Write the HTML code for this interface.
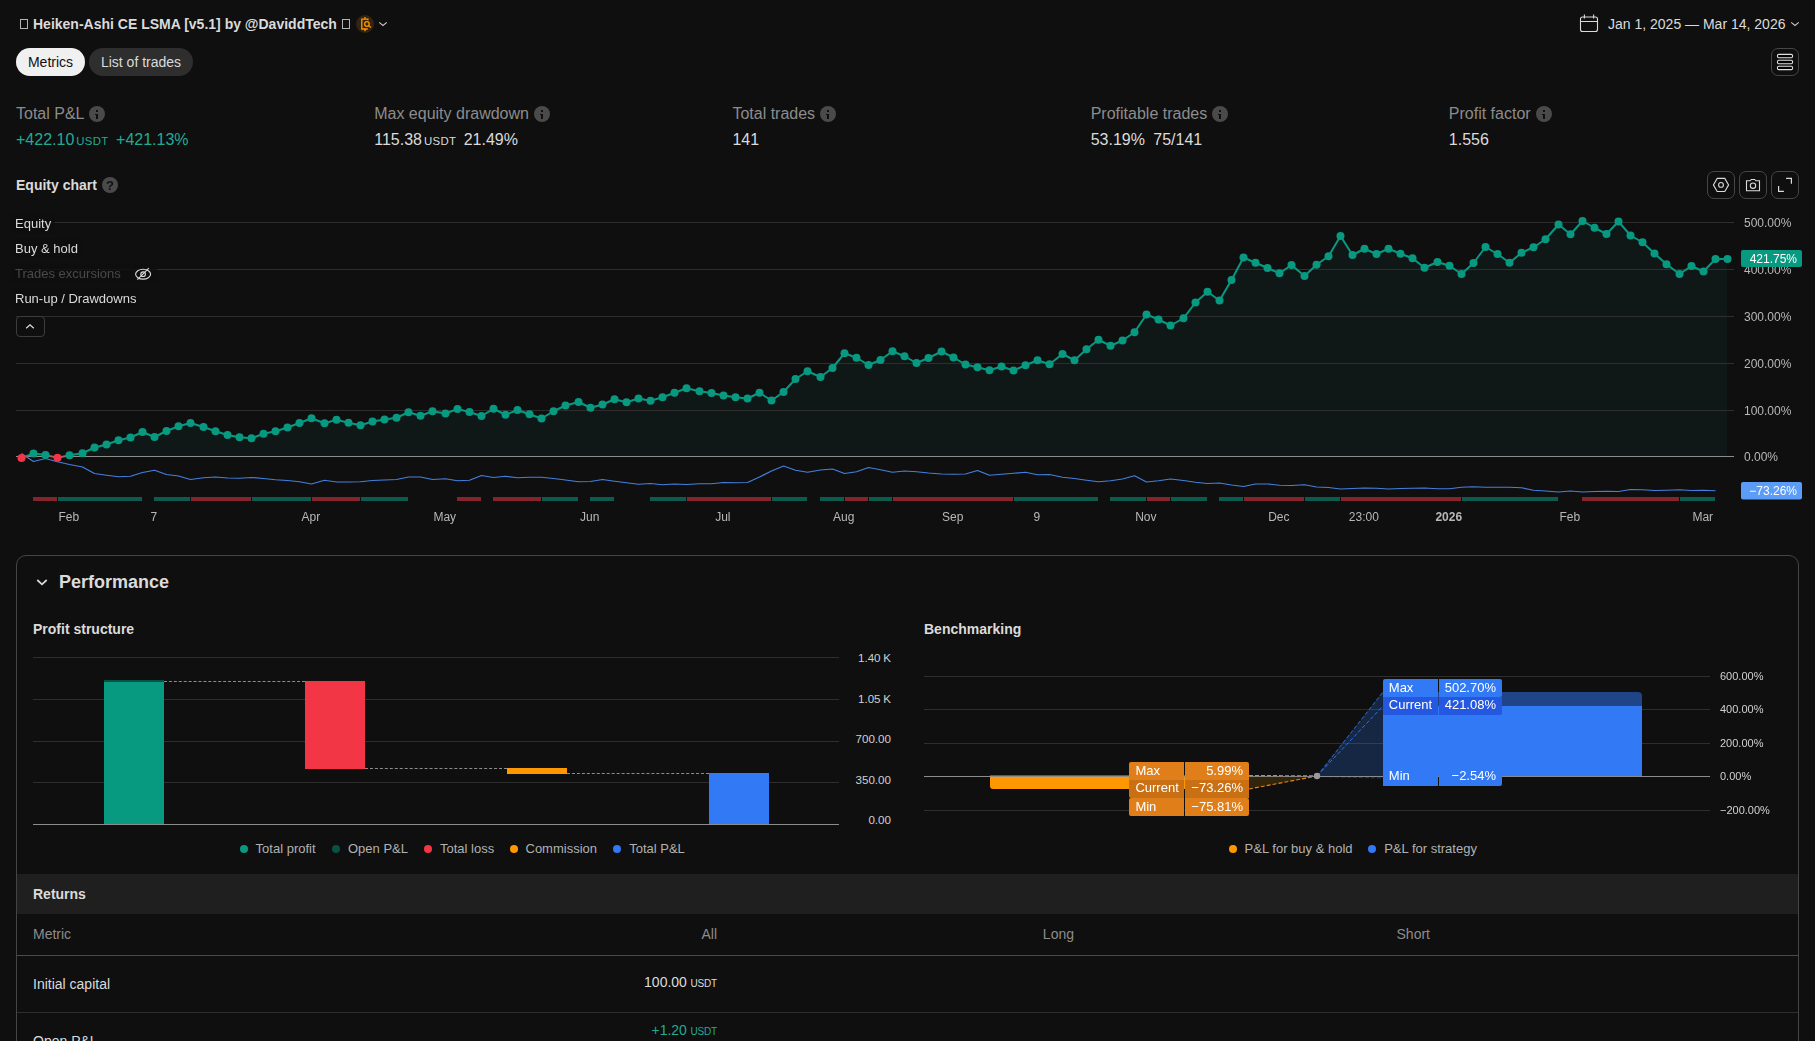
<!DOCTYPE html>
<html lang="en"><head><meta charset="utf-8"><title>Strategy report</title>
<style>
*{box-sizing:border-box}
html,body{margin:0;padding:0}
body{width:1815px;height:1041px;overflow:hidden;position:relative;background:#0f0f0f;color:#dbdbdb;font-family:"Liberation Sans",sans-serif;font-size:14px}
.abs{position:absolute}
.t{position:absolute;white-space:nowrap;line-height:1}
.b{font-weight:700}
.tofu{position:absolute;width:8px;height:10px;border:1px solid #b4b4b4}
.pill{position:absolute;top:48px;height:28px;border-radius:14px;font-size:14px;line-height:28px;text-align:center}
.sq{position:absolute;width:28px;height:28px;border:1px solid #464646;border-radius:7px}
.sq svg{position:absolute;left:-1px;top:-1px}
.ml{font-size:16px;color:#8c8c8c;top:106px}
.mv{font-size:16px;color:#dbdbdb;top:132px}
.cur{font-size:.7143em;letter-spacing:.3px;margin-left:2px}
.gr{color:#22ab94}
.info{position:absolute;width:16px;height:16px;border-radius:50%;background:#4a4a4a;top:106px}
.info i{position:absolute;left:7px;width:2px;background:#0f0f0f}
.leg{position:absolute;left:11px;height:21px;background:rgba(15,15,15,.82);font-size:13px;line-height:21px;padding:0 4px 0 4px;white-space:nowrap;color:#dbdbdb}
.lg{position:absolute;top:842px;font-size:13px;color:#b2b2b2;white-space:nowrap;line-height:14px}
.lg i{position:absolute;left:-16px;top:3px;width:8px;height:8px;border-radius:50%}
.ax{position:absolute;font-size:11.6px;color:#d1d1d1;white-space:nowrap;line-height:12px;margin-top:-.3px;word-spacing:-.5px}
.gl{position:absolute;height:1px;background:#2e2e2e}
.tag{position:absolute;height:18px;color:#fff;font-size:13px;line-height:18px;white-space:nowrap;will-change:transform}
</style></head><body>

<!-- header -->
<div class="tofu" style="left:20px;top:19px"></div>
<div class="t b" style="left:33px;top:17px;font-size:14px">Heiken-Ashi CE LSMA [v5.1] by @DaviddTech</div>
<div class="tofu" style="left:342px;top:19px"></div>
<svg class="abs" style="left:355px;top:14px" width="20" height="20" viewBox="0 0 20 20">
<circle cx="10" cy="10" r="9" fill="#33240f"/>
<g fill="none" stroke="#ff9800" stroke-width="1.3">
<path d="M10 3v2.2M10 15v2.2M12.9 6.3V5.2H6.8v9.8h6"/>
<circle cx="11.9" cy="10" r="2.3"/><path d="M13.6 11.7L16 13.6"/>
</g></svg>
<svg class="abs" style="left:378px;top:20px" width="10" height="8" viewBox="0 0 10 8"><path d="M1.2 2.4L5 5.5L8.8 2.4" fill="none" stroke="#c8c8c8" stroke-width="1.1"/></svg>

<svg class="abs" style="left:1579px;top:13px" width="20" height="20" viewBox="0 0 20 20"><g fill="none" stroke="#dbdbdb" stroke-width="1.1"><rect x="1.5" y="4" width="17" height="14.5" rx="2"/><path d="M1.5 8.5h17M5.4 1.5v4M14.6 1.5v4"/></g></svg>
<div class="t" style="left:1608px;top:17px;font-size:14px">Jan 1, 2025 — Mar 14, 2026</div>
<svg class="abs" style="left:1790px;top:20px" width="10" height="8" viewBox="0 0 10 8"><path d="M1.2 2.4L5 5.5L8.8 2.4" fill="none" stroke="#c8c8c8" stroke-width="1.1"/></svg>

<div class="pill" style="left:16px;width:69px;background:#f0f0f0;color:#0f0f0f">Metrics</div>
<div class="pill" style="left:89px;width:104px;background:#2e2e2e;color:#dbdbdb">List of trades</div>
<div class="sq" style="left:1771px;top:48px"><svg width="28" height="28" viewBox="0 0 28 28"><g fill="#000" stroke="#e0e0e0" stroke-width="1.1"><rect x="6.5" y="6.4" width="15" height="3.4" rx="1.2"/><rect x="6.5" y="12.3" width="15" height="3.4" rx="1.2"/><rect x="6.5" y="18.2" width="15" height="3.4" rx="1.2"/></g></svg></div>

<!-- metrics -->
<div class="t ml" style="left:16px">Total P&amp;L</div><div class="info" style="left:89px"><i style="top:3.500px;height:2px"></i><i style="top:7.500px;height:5.500px"></i><i style="top:7.500px;left:6px;width:2px;height:1.200px"></i></div>
<div class="t mv gr" style="left:16px">+422.10<span class="cur">USDT</span><span style="margin-left:7.5px">+421.13%</span></div>
<div class="t ml" style="left:374.200px">Max equity drawdown</div><div class="info" style="left:534px"><i style="top:3.500px;height:2px"></i><i style="top:7.500px;height:5.500px"></i><i style="top:7.500px;left:6px;width:2px;height:1.200px"></i></div>
<div class="t mv" style="left:374.200px">115.38<span class="cur">USDT</span><span style="margin-left:7.5px">21.49%</span></div>
<div class="t ml" style="left:732.400px">Total trades</div><div class="info" style="left:820px"><i style="top:3.500px;height:2px"></i><i style="top:7.500px;height:5.500px"></i><i style="top:7.500px;left:6px;width:2px;height:1.200px"></i></div>
<div class="t mv" style="left:732.400px">141</div>
<div class="t ml" style="left:1090.700px">Profitable trades</div><div class="info" style="left:1212px"><i style="top:3.500px;height:2px"></i><i style="top:7.500px;height:5.500px"></i><i style="top:7.500px;left:6px;width:2px;height:1.200px"></i></div>
<div class="t mv" style="left:1090.700px">53.19%<span style="margin-left:8.300px">75/141</span></div>
<div class="t ml" style="left:1448.800px">Profit factor</div><div class="info" style="left:1536px"><i style="top:3.500px;height:2px"></i><i style="top:7.500px;height:5.500px"></i><i style="top:7.500px;left:6px;width:2px;height:1.200px"></i></div>
<div class="t mv" style="left:1448.800px">1.556</div>

<!-- equity chart header -->
<div class="t b" style="left:16px;top:178px;font-size:14px">Equity chart</div>
<div class="info" style="left:102px;top:177px"><span class="t b" style="left:4.100px;top:1.800px;font-size:13px;color:#0f0f0f;will-change:transform">?</span></div>
<div class="sq" style="left:1707px;top:171px"><svg width="28" height="28" viewBox="0 0 28 28"><g fill="none" stroke="#dbdbdb" stroke-width="1.1"><path d="M10.200 7.350h7.600l3.800 6.550l-3.800 6.550h-7.600l-3.800-6.550z"/><circle cx="14" cy="13.900" r="2.400"/></g></svg></div>
<div class="sq" style="left:1739px;top:171px"><svg width="28" height="28" viewBox="0 0 28 28"><g fill="none" stroke="#dbdbdb" stroke-width="1.1"><path d="M7.5 9.8h3.6l1.2-1.3h3.4l1.2 1.3h3.6v10h-13z"/><circle cx="14" cy="14.7" r="2.7"/></g></svg></div>
<div class="sq" style="left:1771px;top:171px"><svg width="28" height="28" viewBox="0 0 28 28"><g fill="none" stroke="#dbdbdb" stroke-width="1.2"><path d="M15.100 7.400h5.300v5.300M7.600 15.100v5.300h5.300"/></g></svg></div>

<svg class="abs" style="left:0;top:200px;will-change:transform" width="1815" height="340" viewBox="0 200 1815 340">
<path d="M21.5,456.5 L21.5,458 L33.5,453.5 L45.5,455 L57.5,457.75 L69.5,455.25 L82.5,453.25 L94.5,447.5 L106.5,444.5 L118.5,440.25 L130.5,437.5 L142.5,432 L154.5,437 L166.5,431 L178.5,426.25 L190.5,423 L203.5,427 L215.5,431.25 L227.5,435 L239.5,437.25 L251.5,438.25 L263.5,433.75 L275.5,431.25 L287.5,427.5 L299.5,423 L311.5,418.25 L324.5,423.25 L336.5,419.75 L348.5,422.75 L360.5,425.25 L372.5,421.5 L384.5,419.5 L396.5,417.75 L408.5,412.25 L420.5,415.75 L432.5,411.25 L445.5,413.5 L457.5,409 L469.5,412 L481.5,416 L493.5,408.75 L505.5,414.75 L517.5,410 L529.5,414.25 L541.5,418.5 L553.5,411.25 L565.5,405.5 L578.5,402 L590.5,407.75 L602.5,404.5 L614.5,399.25 L626.5,402.25 L638.5,398.5 L650.5,400.75 L662.5,397.25 L674.5,392.75 L686.5,388.25 L699.5,391.25 L711.5,393 L723.5,395.5 L735.5,397.25 L747.5,398.5 L759.5,392.75 L771.5,400.5 L783.5,392 L795.5,379 L807.5,371.25 L820.5,377 L832.5,368 L844.5,353.25 L856.5,357.75 L868.5,365 L880.5,360 L892.5,351.25 L904.5,356.25 L916.5,363 L928.5,358 L941.5,351.5 L953.5,357.5 L965.5,364.5 L977.5,367.25 L989.5,370.25 L1001.5,366.5 L1013.5,370.5 L1025.5,365.25 L1037.5,360.25 L1049.5,364.25 L1062.5,354 L1074.5,360.25 L1086.5,349.25 L1098.5,339.75 L1110.5,345.75 L1122.5,340.5 L1134.5,332.25 L1146.5,314.5 L1158.5,319.5 L1170.5,325.5 L1183.5,318.25 L1195.5,302.5 L1207.5,291.75 L1219.5,300.5 L1231.5,280 L1243.5,257.5 L1255.5,262.75 L1267.5,268 L1279.5,273.25 L1291.5,265 L1304.5,276 L1316.5,264.75 L1328.5,256.25 L1340.5,236 L1352.5,255 L1364.5,248.75 L1376.5,254 L1388.5,248.75 L1400.5,253.75 L1412.5,258.25 L1424.5,267.75 L1437.5,262 L1449.5,265.75 L1461.5,274 L1473.5,263 L1485.5,247 L1497.5,254 L1509.5,262.75 L1521.5,252.75 L1533.5,247.25 L1545.5,239.25 L1558.5,224.5 L1570.5,234.25 L1582.5,221 L1594.5,227.75 L1606.5,234 L1618.5,221.5 L1630.5,235.5 L1642.5,242.25 L1654.5,253.5 L1666.5,264.25 L1679.5,274 L1691.5,266 L1703.5,271.5 L1715.5,259 L1727.5,259 L1727.0,259 L1727.0,456.5 Z" fill="#101717"/>
<rect x="16" y="222.0" width="1718" height="1" fill="#2e2e2e"/><rect x="16" y="269.0" width="1718" height="1" fill="#2e2e2e"/><rect x="16" y="316.0" width="1718" height="1" fill="#2e2e2e"/><rect x="16" y="363.0" width="1718" height="1" fill="#2e2e2e"/><rect x="16" y="410.0" width="1718" height="1" fill="#2e2e2e"/>
<rect x="16" y="456" width="1718" height="1" fill="#8c8c8c"/>
<polyline points="21.5,453.6 33.5,461.5 45.5,458.5 57.5,461.75 69.5,464.5 82.5,467 94.5,473.5 106.5,475.25 118.5,476.75 130.5,476.25 142.5,472.5 154.5,470.25 166.5,474.5 178.5,476 190.5,479.5 203.5,477.75 215.5,477 227.5,478 239.5,478.25 251.5,477.5 263.5,478.5 275.5,479.75 287.5,480.5 299.5,481.75 311.5,484 324.5,480.25 336.5,482 348.5,482 360.5,481.75 372.5,480.5 384.5,480 396.5,479.5 408.5,477 420.5,477 432.5,479.5 445.5,478.75 457.5,480.75 469.5,480.25 481.5,475.5 493.5,477.5 505.5,476.25 517.5,477.75 529.5,477.25 541.5,477.25 553.5,478.5 565.5,480 578.5,481.75 590.5,481.5 602.5,479.5 614.5,481.25 626.5,482.75 638.5,484.25 650.5,483.5 662.5,484.75 674.5,484 686.5,484.5 699.5,483.75 711.5,483.75 723.5,482.5 735.5,482.75 747.5,482.5 759.5,477 771.5,471 783.5,466 795.5,470.25 807.5,472.25 820.5,470 832.5,469 844.5,473.5 856.5,471.75 868.5,467.5 880.5,469.75 892.5,472.25 904.5,471 916.5,471.75 928.5,473 941.5,474 953.5,474.25 965.5,474 977.5,470.5 989.5,475.25 1001.5,474.25 1013.5,473.25 1025.5,472.25 1037.5,474.75 1049.5,474.5 1062.5,477.25 1074.5,478.5 1086.5,480.25 1098.5,481.75 1110.5,480.75 1122.5,479 1134.5,475.75 1146.5,482 1158.5,480.75 1170.5,479 1183.5,480.5 1195.5,482.25 1207.5,483.5 1219.5,483 1231.5,485 1243.5,486.5 1255.5,484 1267.5,484 1279.5,485.25 1291.5,485.5 1304.5,484.75 1316.5,487 1328.5,487.5 1340.5,489 1352.5,488.5 1364.5,488 1376.5,488.25 1388.5,489 1400.5,488.5 1412.5,488.25 1424.5,488 1437.5,488.75 1449.5,488.75 1461.5,487.25 1473.5,486.75 1485.5,487.25 1497.5,487.25 1509.5,487.25 1521.5,487.75 1533.5,490.25 1545.5,491 1558.5,492 1570.5,491 1582.5,492 1594.5,491.5 1606.5,491.25 1618.5,491.5 1630.5,489.5 1642.5,489.75 1654.5,490.5 1666.5,490.25 1679.5,489.75 1691.5,490.5 1703.5,490.25 1715.5,490.75" fill="none" stroke="#4480e0" stroke-width="1.2" stroke-linejoin="round"/>
<clipPath id="cu"><rect x="0" y="200" width="1815" height="256.5"/></clipPath><clipPath id="cd"><rect x="0" y="456.5" width="1815" height="40"/></clipPath>
<polyline points="21.5,458 33.5,453.5 45.5,455 57.5,457.75 69.5,455.25 82.5,453.25 94.5,447.5 106.5,444.5 118.5,440.25 130.5,437.5 142.5,432 154.5,437 166.5,431 178.5,426.25 190.5,423 203.5,427 215.5,431.25 227.5,435 239.5,437.25 251.5,438.25 263.5,433.75 275.5,431.25 287.5,427.5 299.5,423 311.5,418.25 324.5,423.25 336.5,419.75 348.5,422.75 360.5,425.25 372.5,421.5 384.5,419.5 396.5,417.75 408.5,412.25 420.5,415.75 432.5,411.25 445.5,413.5 457.5,409 469.5,412 481.5,416 493.5,408.75 505.5,414.75 517.5,410 529.5,414.25 541.5,418.5 553.5,411.25 565.5,405.5 578.5,402 590.5,407.75 602.5,404.5 614.5,399.25 626.5,402.25 638.5,398.5 650.5,400.75 662.5,397.25 674.5,392.75 686.5,388.25 699.5,391.25 711.5,393 723.5,395.5 735.5,397.25 747.5,398.5 759.5,392.75 771.5,400.5 783.5,392 795.5,379 807.5,371.25 820.5,377 832.5,368 844.5,353.25 856.5,357.75 868.5,365 880.5,360 892.5,351.25 904.5,356.25 916.5,363 928.5,358 941.5,351.5 953.5,357.5 965.5,364.5 977.5,367.25 989.5,370.25 1001.5,366.5 1013.5,370.5 1025.5,365.25 1037.5,360.25 1049.5,364.25 1062.5,354 1074.5,360.25 1086.5,349.25 1098.5,339.75 1110.5,345.75 1122.5,340.5 1134.5,332.25 1146.5,314.5 1158.5,319.5 1170.5,325.5 1183.5,318.25 1195.5,302.5 1207.5,291.75 1219.5,300.5 1231.5,280 1243.5,257.5 1255.5,262.75 1267.5,268 1279.5,273.25 1291.5,265 1304.5,276 1316.5,264.75 1328.5,256.25 1340.5,236 1352.5,255 1364.5,248.75 1376.5,254 1388.5,248.75 1400.5,253.75 1412.5,258.25 1424.5,267.75 1437.5,262 1449.5,265.75 1461.5,274 1473.5,263 1485.5,247 1497.5,254 1509.5,262.75 1521.5,252.75 1533.5,247.25 1545.5,239.25 1558.5,224.5 1570.5,234.25 1582.5,221 1594.5,227.75 1606.5,234 1618.5,221.5 1630.5,235.5 1642.5,242.25 1654.5,253.5 1666.5,264.25 1679.5,274 1691.5,266 1703.5,271.5 1715.5,259 1727.5,259" fill="none" stroke="#089981" stroke-width="2" stroke-linejoin="round" clip-path="url(#cu)"/>
<polyline points="21.5,458 33.5,453.5 45.5,455 57.5,457.75 69.5,455.25 82.5,453.25 94.5,447.5 106.5,444.5 118.5,440.25 130.5,437.5 142.5,432 154.5,437 166.5,431 178.5,426.25 190.5,423 203.5,427 215.5,431.25 227.5,435 239.5,437.25 251.5,438.25 263.5,433.75 275.5,431.25 287.5,427.5 299.5,423 311.5,418.25 324.5,423.25 336.5,419.75 348.5,422.75 360.5,425.25 372.5,421.5 384.5,419.5 396.5,417.75 408.5,412.25 420.5,415.75 432.5,411.25 445.5,413.5 457.5,409 469.5,412 481.5,416 493.5,408.75 505.5,414.75 517.5,410 529.5,414.25 541.5,418.5 553.5,411.25 565.5,405.5 578.5,402 590.5,407.75 602.5,404.5 614.5,399.25 626.5,402.25 638.5,398.5 650.5,400.75 662.5,397.25 674.5,392.75 686.5,388.25 699.5,391.25 711.5,393 723.5,395.5 735.5,397.25 747.5,398.5 759.5,392.75 771.5,400.5 783.5,392 795.5,379 807.5,371.25 820.5,377 832.5,368 844.5,353.25 856.5,357.75 868.5,365 880.5,360 892.5,351.25 904.5,356.25 916.5,363 928.5,358 941.5,351.5 953.5,357.5 965.5,364.5 977.5,367.25 989.5,370.25 1001.5,366.5 1013.5,370.5 1025.5,365.25 1037.5,360.25 1049.5,364.25 1062.5,354 1074.5,360.25 1086.5,349.25 1098.5,339.75 1110.5,345.75 1122.5,340.5 1134.5,332.25 1146.5,314.5 1158.5,319.5 1170.5,325.5 1183.5,318.25 1195.5,302.5 1207.5,291.75 1219.5,300.5 1231.5,280 1243.5,257.5 1255.5,262.75 1267.5,268 1279.5,273.25 1291.5,265 1304.5,276 1316.5,264.75 1328.5,256.25 1340.5,236 1352.5,255 1364.5,248.75 1376.5,254 1388.5,248.75 1400.5,253.75 1412.5,258.25 1424.5,267.75 1437.5,262 1449.5,265.75 1461.5,274 1473.5,263 1485.5,247 1497.5,254 1509.5,262.75 1521.5,252.75 1533.5,247.25 1545.5,239.25 1558.5,224.5 1570.5,234.25 1582.5,221 1594.5,227.75 1606.5,234 1618.5,221.5 1630.5,235.5 1642.5,242.25 1654.5,253.5 1666.5,264.25 1679.5,274 1691.5,266 1703.5,271.5 1715.5,259 1727.5,259" fill="none" stroke="#f23645" stroke-width="2" stroke-linejoin="round" clip-path="url(#cd)"/>
<circle cx="21.5" cy="458" r="4" fill="#f23645"/><circle cx="33.5" cy="453.5" r="4" fill="#089981"/><circle cx="45.5" cy="455" r="4" fill="#089981"/><circle cx="57.5" cy="457.75" r="4" fill="#f23645"/><circle cx="69.5" cy="455.25" r="4" fill="#089981"/><circle cx="82.5" cy="453.25" r="4" fill="#089981"/><circle cx="94.5" cy="447.5" r="4" fill="#089981"/><circle cx="106.5" cy="444.5" r="4" fill="#089981"/><circle cx="118.5" cy="440.25" r="4" fill="#089981"/><circle cx="130.5" cy="437.5" r="4" fill="#089981"/><circle cx="142.5" cy="432" r="4" fill="#089981"/><circle cx="154.5" cy="437" r="4" fill="#089981"/><circle cx="166.5" cy="431" r="4" fill="#089981"/><circle cx="178.5" cy="426.25" r="4" fill="#089981"/><circle cx="190.5" cy="423" r="4" fill="#089981"/><circle cx="203.5" cy="427" r="4" fill="#089981"/><circle cx="215.5" cy="431.25" r="4" fill="#089981"/><circle cx="227.5" cy="435" r="4" fill="#089981"/><circle cx="239.5" cy="437.25" r="4" fill="#089981"/><circle cx="251.5" cy="438.25" r="4" fill="#089981"/><circle cx="263.5" cy="433.75" r="4" fill="#089981"/><circle cx="275.5" cy="431.25" r="4" fill="#089981"/><circle cx="287.5" cy="427.5" r="4" fill="#089981"/><circle cx="299.5" cy="423" r="4" fill="#089981"/><circle cx="311.5" cy="418.25" r="4" fill="#089981"/><circle cx="324.5" cy="423.25" r="4" fill="#089981"/><circle cx="336.5" cy="419.75" r="4" fill="#089981"/><circle cx="348.5" cy="422.75" r="4" fill="#089981"/><circle cx="360.5" cy="425.25" r="4" fill="#089981"/><circle cx="372.5" cy="421.5" r="4" fill="#089981"/><circle cx="384.5" cy="419.5" r="4" fill="#089981"/><circle cx="396.5" cy="417.75" r="4" fill="#089981"/><circle cx="408.5" cy="412.25" r="4" fill="#089981"/><circle cx="420.5" cy="415.75" r="4" fill="#089981"/><circle cx="432.5" cy="411.25" r="4" fill="#089981"/><circle cx="445.5" cy="413.5" r="4" fill="#089981"/><circle cx="457.5" cy="409" r="4" fill="#089981"/><circle cx="469.5" cy="412" r="4" fill="#089981"/><circle cx="481.5" cy="416" r="4" fill="#089981"/><circle cx="493.5" cy="408.75" r="4" fill="#089981"/><circle cx="505.5" cy="414.75" r="4" fill="#089981"/><circle cx="517.5" cy="410" r="4" fill="#089981"/><circle cx="529.5" cy="414.25" r="4" fill="#089981"/><circle cx="541.5" cy="418.5" r="4" fill="#089981"/><circle cx="553.5" cy="411.25" r="4" fill="#089981"/><circle cx="565.5" cy="405.5" r="4" fill="#089981"/><circle cx="578.5" cy="402" r="4" fill="#089981"/><circle cx="590.5" cy="407.75" r="4" fill="#089981"/><circle cx="602.5" cy="404.5" r="4" fill="#089981"/><circle cx="614.5" cy="399.25" r="4" fill="#089981"/><circle cx="626.5" cy="402.25" r="4" fill="#089981"/><circle cx="638.5" cy="398.5" r="4" fill="#089981"/><circle cx="650.5" cy="400.75" r="4" fill="#089981"/><circle cx="662.5" cy="397.25" r="4" fill="#089981"/><circle cx="674.5" cy="392.75" r="4" fill="#089981"/><circle cx="686.5" cy="388.25" r="4" fill="#089981"/><circle cx="699.5" cy="391.25" r="4" fill="#089981"/><circle cx="711.5" cy="393" r="4" fill="#089981"/><circle cx="723.5" cy="395.5" r="4" fill="#089981"/><circle cx="735.5" cy="397.25" r="4" fill="#089981"/><circle cx="747.5" cy="398.5" r="4" fill="#089981"/><circle cx="759.5" cy="392.75" r="4" fill="#089981"/><circle cx="771.5" cy="400.5" r="4" fill="#089981"/><circle cx="783.5" cy="392" r="4" fill="#089981"/><circle cx="795.5" cy="379" r="4" fill="#089981"/><circle cx="807.5" cy="371.25" r="4" fill="#089981"/><circle cx="820.5" cy="377" r="4" fill="#089981"/><circle cx="832.5" cy="368" r="4" fill="#089981"/><circle cx="844.5" cy="353.25" r="4" fill="#089981"/><circle cx="856.5" cy="357.75" r="4" fill="#089981"/><circle cx="868.5" cy="365" r="4" fill="#089981"/><circle cx="880.5" cy="360" r="4" fill="#089981"/><circle cx="892.5" cy="351.25" r="4" fill="#089981"/><circle cx="904.5" cy="356.25" r="4" fill="#089981"/><circle cx="916.5" cy="363" r="4" fill="#089981"/><circle cx="928.5" cy="358" r="4" fill="#089981"/><circle cx="941.5" cy="351.5" r="4" fill="#089981"/><circle cx="953.5" cy="357.5" r="4" fill="#089981"/><circle cx="965.5" cy="364.5" r="4" fill="#089981"/><circle cx="977.5" cy="367.25" r="4" fill="#089981"/><circle cx="989.5" cy="370.25" r="4" fill="#089981"/><circle cx="1001.5" cy="366.5" r="4" fill="#089981"/><circle cx="1013.5" cy="370.5" r="4" fill="#089981"/><circle cx="1025.5" cy="365.25" r="4" fill="#089981"/><circle cx="1037.5" cy="360.25" r="4" fill="#089981"/><circle cx="1049.5" cy="364.25" r="4" fill="#089981"/><circle cx="1062.5" cy="354" r="4" fill="#089981"/><circle cx="1074.5" cy="360.25" r="4" fill="#089981"/><circle cx="1086.5" cy="349.25" r="4" fill="#089981"/><circle cx="1098.5" cy="339.75" r="4" fill="#089981"/><circle cx="1110.5" cy="345.75" r="4" fill="#089981"/><circle cx="1122.5" cy="340.5" r="4" fill="#089981"/><circle cx="1134.5" cy="332.25" r="4" fill="#089981"/><circle cx="1146.5" cy="314.5" r="4" fill="#089981"/><circle cx="1158.5" cy="319.5" r="4" fill="#089981"/><circle cx="1170.5" cy="325.5" r="4" fill="#089981"/><circle cx="1183.5" cy="318.25" r="4" fill="#089981"/><circle cx="1195.5" cy="302.5" r="4" fill="#089981"/><circle cx="1207.5" cy="291.75" r="4" fill="#089981"/><circle cx="1219.5" cy="300.5" r="4" fill="#089981"/><circle cx="1231.5" cy="280" r="4" fill="#089981"/><circle cx="1243.5" cy="257.5" r="4" fill="#089981"/><circle cx="1255.5" cy="262.75" r="4" fill="#089981"/><circle cx="1267.5" cy="268" r="4" fill="#089981"/><circle cx="1279.5" cy="273.25" r="4" fill="#089981"/><circle cx="1291.5" cy="265" r="4" fill="#089981"/><circle cx="1304.5" cy="276" r="4" fill="#089981"/><circle cx="1316.5" cy="264.75" r="4" fill="#089981"/><circle cx="1328.5" cy="256.25" r="4" fill="#089981"/><circle cx="1340.5" cy="236" r="4" fill="#089981"/><circle cx="1352.5" cy="255" r="4" fill="#089981"/><circle cx="1364.5" cy="248.75" r="4" fill="#089981"/><circle cx="1376.5" cy="254" r="4" fill="#089981"/><circle cx="1388.5" cy="248.75" r="4" fill="#089981"/><circle cx="1400.5" cy="253.75" r="4" fill="#089981"/><circle cx="1412.5" cy="258.25" r="4" fill="#089981"/><circle cx="1424.5" cy="267.75" r="4" fill="#089981"/><circle cx="1437.5" cy="262" r="4" fill="#089981"/><circle cx="1449.5" cy="265.75" r="4" fill="#089981"/><circle cx="1461.5" cy="274" r="4" fill="#089981"/><circle cx="1473.5" cy="263" r="4" fill="#089981"/><circle cx="1485.5" cy="247" r="4" fill="#089981"/><circle cx="1497.5" cy="254" r="4" fill="#089981"/><circle cx="1509.5" cy="262.75" r="4" fill="#089981"/><circle cx="1521.5" cy="252.75" r="4" fill="#089981"/><circle cx="1533.5" cy="247.25" r="4" fill="#089981"/><circle cx="1545.5" cy="239.25" r="4" fill="#089981"/><circle cx="1558.5" cy="224.5" r="4" fill="#089981"/><circle cx="1570.5" cy="234.25" r="4" fill="#089981"/><circle cx="1582.5" cy="221" r="4" fill="#089981"/><circle cx="1594.5" cy="227.75" r="4" fill="#089981"/><circle cx="1606.5" cy="234" r="4" fill="#089981"/><circle cx="1618.5" cy="221.5" r="4" fill="#089981"/><circle cx="1630.5" cy="235.5" r="4" fill="#089981"/><circle cx="1642.5" cy="242.25" r="4" fill="#089981"/><circle cx="1654.5" cy="253.5" r="4" fill="#089981"/><circle cx="1666.5" cy="264.25" r="4" fill="#089981"/><circle cx="1679.5" cy="274" r="4" fill="#089981"/><circle cx="1691.5" cy="266" r="4" fill="#089981"/><circle cx="1703.5" cy="271.5" r="4" fill="#089981"/><circle cx="1715.5" cy="259" r="4" fill="#089981"/><circle cx="1727.5" cy="259" r="4" fill="#089981"/>
<rect x="33.00" y="497" width="24.00" height="4" fill="#86242d"/><rect x="58.00" y="497" width="84.00" height="4" fill="#0b5c4f"/><rect x="154.00" y="497" width="36.00" height="4" fill="#0b5c4f"/><rect x="191.00" y="497" width="60.00" height="4" fill="#86242d"/><rect x="252.00" y="497" width="59.00" height="4" fill="#0b5c4f"/><rect x="312.00" y="497" width="48.00" height="4" fill="#86242d"/><rect x="361.00" y="497" width="47.00" height="4" fill="#0b5c4f"/><rect x="457.00" y="497" width="24.00" height="4" fill="#86242d"/><rect x="493.00" y="497" width="48.00" height="4" fill="#86242d"/><rect x="542.00" y="497" width="36.00" height="4" fill="#0b5c4f"/><rect x="590.00" y="497" width="24.00" height="4" fill="#0b5c4f"/><rect x="650.00" y="497" width="36.00" height="4" fill="#0b5c4f"/><rect x="687.00" y="497" width="84.00" height="4" fill="#86242d"/><rect x="772.00" y="497" width="35.00" height="4" fill="#0b5c4f"/><rect x="820.00" y="497" width="24.00" height="4" fill="#0b5c4f"/><rect x="845.00" y="497" width="23.00" height="4" fill="#86242d"/><rect x="869.00" y="497" width="23.00" height="4" fill="#0b5c4f"/><rect x="893.00" y="497" width="120.00" height="4" fill="#86242d"/><rect x="1014.00" y="497" width="84.00" height="4" fill="#0b5c4f"/><rect x="1110.00" y="497" width="36.00" height="4" fill="#0b5c4f"/><rect x="1147.00" y="497" width="23.00" height="4" fill="#86242d"/><rect x="1171.00" y="497" width="36.00" height="4" fill="#0b5c4f"/><rect x="1219.00" y="497" width="24.00" height="4" fill="#0b5c4f"/><rect x="1244.00" y="497" width="60.00" height="4" fill="#86242d"/><rect x="1305.00" y="497" width="35.00" height="4" fill="#0b5c4f"/><rect x="1341.00" y="497" width="120.00" height="4" fill="#86242d"/><rect x="1462.00" y="497" width="96.00" height="4" fill="#0b5c4f"/><rect x="1582.00" y="497" width="97.00" height="4" fill="#86242d"/><rect x="1680.00" y="497" width="35.00" height="4" fill="#0b5c4f"/>
<g font-size="12" fill="#b8b8b8" font-family="Liberation Sans, sans-serif"><text x="68.8" y="521.3" text-anchor="middle">Feb</text><text x="153.8" y="521.3" text-anchor="middle">7</text><text x="310.8" y="521.3" text-anchor="middle">Apr</text><text x="444.8" y="521.3" text-anchor="middle">May</text><text x="589.8" y="521.3" text-anchor="middle">Jun</text><text x="722.8" y="521.3" text-anchor="middle">Jul</text><text x="843.8" y="521.3" text-anchor="middle">Aug</text><text x="952.8" y="521.3" text-anchor="middle">Sep</text><text x="1036.8" y="521.3" text-anchor="middle">9</text><text x="1145.8" y="521.3" text-anchor="middle">Nov</text><text x="1278.8" y="521.3" text-anchor="middle">Dec</text><text x="1363.8" y="521.3" text-anchor="middle">23:00</text><text x="1448.8" y="521.3" text-anchor="middle" font-weight="700">2026</text><text x="1569.8" y="521.3" text-anchor="middle">Feb</text><text x="1702.8" y="521.3" text-anchor="middle">Mar</text><text x="1744" y="226.8">500.00%</text><text x="1744" y="273.8">400.00%</text><text x="1744" y="320.8">300.00%</text><text x="1744" y="367.8">200.00%</text><text x="1744" y="414.8">100.00%</text><text x="1744" y="460.8">0.00%</text></g>
<rect x="1741" y="250" width="61" height="17" rx="2" fill="#089981"/>
<text x="1797" y="262.8" text-anchor="end" font-size="12" fill="#fff" font-family="Liberation Sans, sans-serif">421.75%</text>
<rect x="1741" y="482" width="61" height="17.5" rx="2" fill="#5b9cf6"/>
<text x="1797" y="494.8" text-anchor="end" font-size="12" fill="#fff" font-family="Liberation Sans, sans-serif">−73.26%</text>
</svg>

<!-- legend overlay -->
<div class="leg" style="top:213px">Equity</div>
<div class="leg" style="top:238px">Buy &amp; hold</div>
<div class="leg" style="top:263px;color:#4a4a4a;width:146px">Trades excursions
<svg class="abs" style="left:123px;top:2px" width="18" height="18" viewBox="0 0 18 18"><g fill="none" stroke="#dbdbdb" stroke-width="1.1"><ellipse cx="9.100" cy="9.200" rx="7.500" ry="4.900"/><circle cx="9.100" cy="9.200" r="2.300"/><path d="M3.400 14.600L14.800 3.200"/></g></svg></div>
<div class="leg" style="top:288px">Run-up / Drawdowns</div>
<div class="abs" style="left:16px;top:316px;width:29px;height:21px;border:1px solid #3d3d3d;border-radius:4px;background:#0f0f0f"><svg class="abs" style="left:7.3px;top:5px" width="12" height="9" viewBox="0 0 12 9"><path d="M2.200 6.200L6 2.800L9.800 6.200" fill="none" stroke="#dbdbdb" stroke-width="1.3"/></svg></div>

<!-- performance panel -->
<div class="abs" style="left:16px;top:555px;width:1783px;height:520px;border:1px solid #454545;border-radius:10px"></div>
<svg class="abs" style="left:35px;top:577px" width="14" height="10" viewBox="0 0 14 10"><path d="M2.300 3L7 7.300L11.700 3" fill="none" stroke="#dbdbdb" stroke-width="1.700"/></svg>
<div class="t b" style="left:59px;top:573px;font-size:18px">Performance</div>

<div class="t b" style="left:33px;top:622px;font-size:14px">Profit structure</div>
<div class="gl" style="left:33px;top:657px;width:806px"></div>
<div class="gl" style="left:33px;top:699px;width:806px"></div>
<div class="gl" style="left:33px;top:741px;width:806px"></div>
<div class="gl" style="left:33px;top:782px;width:806px"></div>
<div class="abs" style="left:104px;top:680px;width:60px;height:2px;background:#075243"></div>
<div class="abs" style="left:104px;top:682px;width:60px;height:142px;background:#089981"></div>
<div class="abs" style="left:305px;top:681px;width:60px;height:88px;background:#f23645"></div>
<div class="abs" style="left:507px;top:768px;width:60px;height:6px;background:#ff9800"></div>
<div class="abs" style="left:709px;top:773px;width:60px;height:51px;background:#3179f5"></div>
<div class="abs" style="left:164px;top:681px;width:141px;height:0;border-top:1px dashed #8c8c8c"></div>
<div class="abs" style="left:365px;top:768px;width:142px;height:0;border-top:1px dashed #8c8c8c"></div>
<div class="abs" style="left:567px;top:773px;width:142px;height:0;border-top:1px dashed #8c8c8c"></div>
<div class="abs" style="left:33px;top:824px;width:806px;height:1px;background:#8c8c8c"></div>
<div class="ax" style="right:924px;top:652px">1.40 K</div>
<div class="ax" style="right:924px;top:693px">1.05 K</div>
<div class="ax" style="right:924px;top:733px">700.00</div>
<div class="ax" style="right:924px;top:774px">350.00</div>
<div class="ax" style="right:924px;top:814px">0.00</div>
<div class="lg" style="left:255.600px"><i style="background:#089981"></i>Total profit</div>
<div class="lg" style="left:348px"><i style="background:#075243"></i>Open P&amp;L</div>
<div class="lg" style="left:440px"><i style="background:#f23645"></i>Total loss</div>
<div class="lg" style="left:525.500px"><i style="background:#ff9800"></i>Commission</div>
<div class="lg" style="left:629.200px"><i style="background:#3179f5"></i>Total P&amp;L</div>

<!-- benchmarking -->
<div class="t b" style="left:924px;top:622px;font-size:14px">Benchmarking</div>
<div class="gl" style="left:924px;top:676px;width:786px"></div>
<div class="gl" style="left:924px;top:709px;width:786px"></div>
<div class="gl" style="left:924px;top:743px;width:786px"></div>
<div class="gl" style="left:924px;top:810px;width:786px"></div>
<div class="abs" style="left:924px;top:776px;width:786px;height:1px;background:#8c8c8c"></div>
<div class="ax" style="left:1720px;top:670px;margin-top:-.2px;font-size:11px;will-change:transform">600.00%</div>
<div class="ax" style="left:1720px;top:703px;margin-top:-.2px;font-size:11px;will-change:transform">400.00%</div>
<div class="ax" style="left:1720px;top:737px;margin-top:-.2px;font-size:11px;will-change:transform">200.00%</div>
<div class="ax" style="left:1720px;top:770px;margin-top:-.2px;font-size:11px;will-change:transform">0.00%</div>
<div class="ax" style="left:1720px;top:804px;margin-top:-.2px;font-size:11px;will-change:transform">−200.00%</div>
<svg class="abs" style="left:924px;top:660px" width="790" height="170" viewBox="924 660 790 170">
<path d="M1317 776L1383 692V777.500Z" fill="rgba(49,121,245,.23)"/>
<path d="M1249 775.500L1317 776L1249 789Z" fill="#33240c"/>
<path d="M1317 776L1383 692M1317 776L1383 706" fill="none" stroke="#2f6fe0" stroke-width="1" stroke-dasharray="4 2"/><path d="M1317 776.500L1383 778" fill="none" stroke="#2f6fe0" stroke-opacity=".45" stroke-width="1" stroke-dasharray="4 2"/>
<path d="M1249 775.500L1317 776M1249 789L1317 776" fill="none" stroke="#e0861a" stroke-width="1.200" stroke-dasharray="4 2"/>
<path d="M1383 692H1638a4 4 0 0 1 4 4V707H1383Z" fill="#1f4488"/>
<rect x="1383" y="706" width="259" height="70.500" fill="#3179f5"/>
<path d="M993 775.500H1190V789H993a3 3 0 0 1-3-3V775.500Z" fill="#ff9800"/>
<rect x="924" y="776" width="786" height="1" fill="#8c8c8c" fill-opacity=".9"/><circle cx="1317" cy="776" r="3.200" fill="#9a9a9a"/>
</svg>
<div class="tag" style="left:1129px;top:762px;width:55px;background:#e07f1a;padding-left:6.400px;border-radius:2px 0 0 0">Max</div>
<div class="tag" style="left:1185px;top:762px;width:64px;background:#e07f1a;text-align:right;padding-right:6px;border-radius:0 2px 0 0">5.99%</div>
<div class="tag" style="left:1129px;top:780px;width:55px;height:17.500px;line-height:16.600px;border-radius:0 0 0 2px;background:#c96f14;padding-left:6.400px">Current</div>
<div class="tag" style="left:1185px;top:780px;width:64px;height:17.500px;line-height:16.600px;background:#c96f14;text-align:right;padding-right:6px">−73.26%</div>
<div class="tag" style="left:1129px;top:798.200px;width:55px;height:17.800px;border-radius:2px 0 0 2px;background:#e07f1a;padding-left:6.400px">Min</div>
<div class="tag" style="left:1185px;top:798.200px;width:64px;height:17.800px;border-radius:0 2px 2px 0;background:#e07f1a;text-align:right;padding-right:6px">−75.81%</div>
<div class="tag" style="left:1383px;top:679px;width:55px;background:#3179f5;padding-left:5.800px;border-radius:2px 0 0 0">Max</div>
<div class="tag" style="left:1439px;top:679px;width:63px;background:#3179f5;text-align:right;padding-right:6px;border-radius:0 2px 2px 0">502.70%</div>
<div class="tag" style="left:1383px;top:697px;width:55px;line-height:16.600px;background:#2458e0;padding-left:5.800px">Current</div>
<div class="tag" style="left:1439px;top:697px;width:63px;line-height:16.600px;background:#2458e0;text-align:right;padding-right:6px;border-radius:0 0 2px 0">421.08%</div>
<div class="tag" style="left:1383px;top:767px;width:55px;height:19px;background:#3179f5;padding-left:5.800px">Min</div>
<div class="tag" style="left:1439px;top:767px;width:63px;height:19px;background:#3179f5;text-align:right;padding-right:6px;border-radius:0 0 2px 0">−2.54%</div>
<div class="lg" style="left:1244.600px"><i style="background:#ff9800"></i>P&amp;L for buy &amp; hold</div>
<div class="lg" style="left:1384.200px"><i style="background:#3179f5"></i>P&amp;L for strategy</div>

<!-- returns table -->
<div class="abs" style="left:17px;top:874px;width:1781px;height:40px;background:#1f1f1f"></div>
<div class="t b" style="left:33px;top:887px;font-size:14px">Returns</div>
<div class="t" style="left:33px;top:927px;font-size:14px;color:#8c8c8c">Metric</div>
<div class="t" style="right:1098px;top:927px;font-size:14px;color:#8c8c8c">All</div>
<div class="t" style="right:741px;top:927px;font-size:14px;color:#8c8c8c">Long</div>
<div class="t" style="right:385px;top:927px;font-size:14px;color:#8c8c8c">Short</div>
<div class="abs" style="left:17px;top:955px;width:1781px;height:1px;background:#4a4a4a"></div>
<div class="t" style="left:33px;top:977px;font-size:14px">Initial capital</div>
<div class="t" style="right:1098px;top:975px;font-size:14px">100.00<span style="font-size:10px;letter-spacing:-.2px;margin-left:3.700px">USDT</span></div>
<div class="abs" style="left:17px;top:1012px;width:1781px;height:1px;background:#2e2e2e"></div>
<div class="t" style="left:33px;top:1034px;font-size:14px">Open P&amp;L</div>
<div class="t gr" style="right:1098px;top:1023px;font-size:14px">+1.20<span style="font-size:10px;letter-spacing:-.2px;margin-left:3.700px">USDT</span></div>
</body></html>
